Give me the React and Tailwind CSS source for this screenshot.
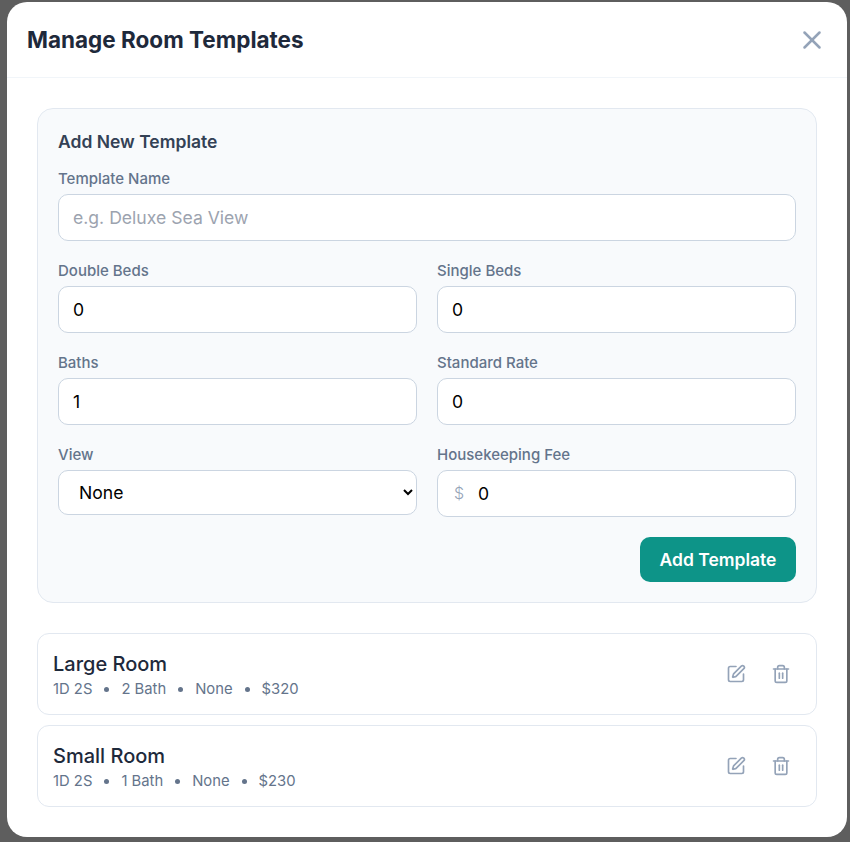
import { X, SquarePen, Trash2 } from 'lucide-react'

const labelClass = 'block text-[15px] leading-[17px] font-[450] text-[#64748b] mb-[7px]'
const inputClass =
  'w-full h-[47px] px-[14px] rounded-[10px] border border-[#cbd5e1] bg-white text-[17.6px] text-black outline-none placeholder:text-[#9ca3af]'

const Field = ({ label, children }) => (
  <div className="h-[72px]">
    <label className={labelClass}>{label}</label>
    {children}
  </div>
)

const TemplateRow = ({ name, baths, price }) => {
  const parts = ['1D 2S', baths, 'None', price]

  return (
    <div className="h-[82px] flex items-center justify-between pl-[15px] pr-[25px] rounded-[12px] border border-[#e2e8f0] bg-white">
      <div className="mt-[3px]">
        <div className="text-[20px] leading-[23px] font-medium text-[#1e293b]">{name}</div>
        <div className="flex items-center gap-[12px] mt-[5px] text-[14.8px] leading-[17px] text-[#64748b]">
          {parts.map((part, i) => (
            <span key={part} className="flex items-center gap-[12px]">
              {i > 0 && <span className="w-[5px] h-[5px] rounded-full bg-[#64748b]" />}
              {part}
            </span>
          ))}
        </div>
      </div>
      <div className="flex items-center gap-[25px] text-[#94a3b8]">
        <SquarePen size={20} />
        <Trash2 size={20} />
      </div>
    </div>
  )
}

export default function App() {
  return (
    <div className="h-[842px] pt-[2px] pl-[7px] bg-[#5e5e5e] font-['Inter',sans-serif]">
      <div className="w-[840px] h-[835px] rounded-[20px] bg-white overflow-hidden">
        <div className="h-[76px] flex items-center justify-between pl-[20px] pr-[20px] border-b border-[#f1f5f9]">
          <h2 className="text-[22.5px] font-bold text-[#1e293b]">Manage Room Templates</h2>
          <X size={30} strokeWidth={2} className="text-[#94a3b8]" />
        </div>

        <div className="px-[30px] pt-[30px]">
          <div className="h-[495px] rounded-[16px] border border-[#e2e8f0] bg-[#f8fafc] pt-[20px] px-[20px]">
            <h3 className="text-[17.5px] leading-[26px] font-semibold text-[#334155] mb-[15px]">
              Add New Template
            </h3>
            <div className="h-[72px] mb-[20px]">
              <label className={labelClass}>Template Name</label>
              <input className={inputClass} placeholder="e.g. Deluxe Sea View" />
            </div>
            <div className="grid grid-cols-2 gap-x-[20px] gap-y-[20px]">
              <Field label="Double Beds">
                <input className={inputClass} defaultValue="0" />
              </Field>
              <Field label="Single Beds">
                <input className={inputClass} defaultValue="0" />
              </Field>
              <Field label="Baths">
                <input className={inputClass} defaultValue="1" />
              </Field>
              <Field label="Standard Rate">
                <input className={inputClass} defaultValue="0" />
              </Field>
              <Field label="View">
                <select className="w-full h-[45px] px-[16px] rounded-[10px] border border-[#cbd5e1] bg-white text-[17.6px] text-black outline-none">
                  <option>None</option>
                </select>
              </Field>
              <Field label="Housekeeping Fee">
                <div className="relative">
                  <span className="absolute left-[17px] top-[12px] text-[16px] leading-[23px] font-light text-[#94a3b8]">$</span>
                  <input className={`${inputClass} pl-[40px] text-[#1e293b]`} defaultValue="0" />
                </div>
              </Field>
            </div>
            <div className="flex justify-end mt-[19px]">
              <button className="w-[156px] h-[45px] pt-[1px] rounded-[10px] bg-[#0d9488] text-white text-[17.5px] font-semibold">
                Add Template
              </button>
            </div>
          </div>

          <div className="mt-[30px] flex flex-col gap-[10px]">
            <TemplateRow name="Large Room" baths="2 Bath" price="$320" />
            <TemplateRow name="Small Room" baths="1 Bath" price="$230" />
          </div>
        </div>
      </div>
    </div>
  )
}
